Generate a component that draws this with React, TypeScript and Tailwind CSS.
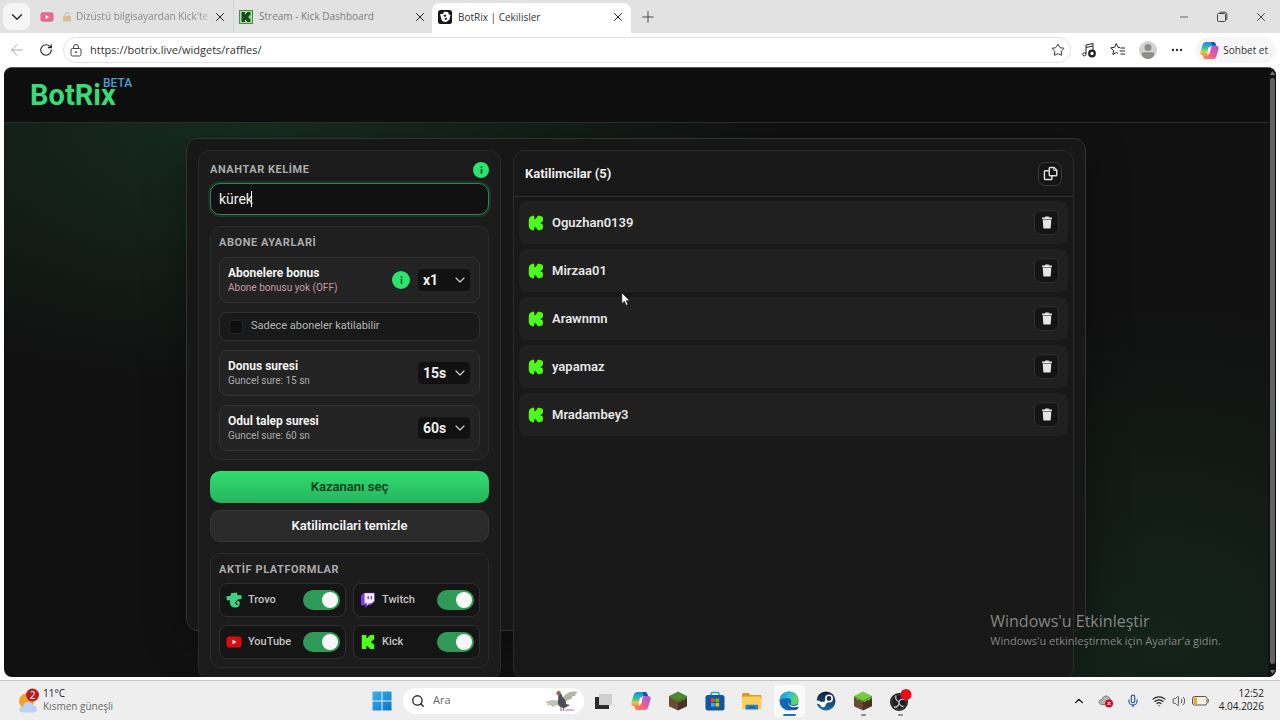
import { useState } from "react";
import type { ReactNode } from "react";
import {
  ArrowLeft,
  ChevronDown,
  ChevronUp,
  Ellipsis,
  Mic,
  Minus,
  Plus,
  RotateCw,
  Search,
  Star,
  Volume2,
  Wifi,
  X
} from "lucide-react";

const participants = ["Oguzhan0139", "Mirzaa01", "Arawnmn", "yapamaz", "Mradambey3"];

const KICK_PATH =
  "M1.333 0h8v5.333H12V2.667h2.667V0h8v8H20v2.667h-2.667v2.666H20V16h2.667v8h-8v-2.667H12v-2.666H9.333V24h-8Z";

function KickIcon({ className }: { className?: string }) {
  return (
    <svg viewBox="0 0 24 24" className={className} fill="#53fc18" aria-hidden="true">
      <path d={KICK_PATH} />
    </svg>
  );
}

function KickBadge() {
  return (
    <svg viewBox="-1 -1 26 26" className="size-4 shrink-0" aria-hidden="true">
      <path
        d="M3.500 4.500 7 2.500v5.500l3.500 1 3.500-3L16.500 2.500l4.300 1.500V8L17 11v2l3.800 3v4l-4.300 1.500-2.500-3.500-3.500-2.500L7 16.500v5l-3.500-2-.8-3V7.500Z"
        fill="#4dfa1e"
        stroke="#4dfa1e"
        strokeWidth="5"
        strokeLinejoin="round"
      />
      <path d="M11 0v4.200M11 20v4.200" stroke="#202020" strokeWidth="1.500" />
    </svg>
  );
}

function TrovoIcon() {
  return (
    <svg viewBox="0 0 16 16" className="size-4" aria-hidden="true">
      <path
        d="M4.800 1.200 11 .600l.600 2.600 3.700-.2.400 3.800-3 .7H11c2 .8 3 2.300 2.800 4.400-.2 2.200-2.300 3.700-4.900 3.700-3.100 0-4.900-1.900-4.900-4.500V8.500L.900 8.200.200 4.600l4.400-.8Z"
        fill="#3fd17f"
      />
      <path
        d="M15 8.500c-2-.4-4.200 0-5 1.400-.9 1.600.6 3.200 2 2.400"
        fill="none"
        stroke="#151515"
        strokeWidth="1"
      />
    </svg>
  );
}

function TwitchIcon() {
  return (
    <svg viewBox="0 0 16 16" className="size-4" aria-hidden="true">
      <path d="M1 3.500 4 .800h10.500v8.700l-4.300 3.800H8L5.300 16v-2.700H1Z" fill="#7c3aed" />
      <path d="M4.600 1.200h9.700V9l-2.500 2.300H9.500L7 13.300v-2H4.600Z" fill="#f5efff" />
      <path d="M8.200 4v3.200M11.300 4v3.200" stroke="#6d28d9" strokeWidth="1.200" />
    </svg>
  );
}

function YoutubeIcon({ className }: { className?: string }) {
  return (
    <svg viewBox="0 0 16 12" className={className} aria-hidden="true">
      <rect x="0.500" y="0.500" width="15" height="11" rx="2.800" fill="currentColor" />
      <path d="m6.500 3.700 4 2.300-4 2.300Z" fill="#fff" />
    </svg>
  );
}

function TrashIcon() {
  return (
    <svg viewBox="0 0 12 13" className="h-[13px] w-3" fill="#e4e4e4" aria-hidden="true">
      <path d="M4.300.500h3.400l.5.900h2.800v1.500H1V1.400h2.800Z" />
      <path d="M1.700 3.500h8.600l-.6 8.200c0 .500-.4.900-1 .9H3.300c-.6 0-1-.4-1-.9Z" />
    </svg>
  );
}

function CopyIcon() {
  return (
    <svg viewBox="0 0 16 16" className="size-[15px]" fill="none" stroke="#dcdcdc" strokeWidth="1.600" aria-hidden="true">
      <path d="M7.500 1.500h4.200l3 3v5.200a.8.8 0 0 1-.8.800H7.500a.8.8 0 0 1-.8-.8V2.300a.8.8 0 0 1 .8-.8Z" />
      <path d="M11.500 1.700v3h3" strokeWidth="1" />
      <path d="M6.500 5H2.300a.8.8 0 0 0-.8.800v7.900c0 .4.400.8.800.8h6.400a.8.8 0 0 0 .8-.8v-3" />
    </svg>
  );
}

function CopilotIcon({ className }: { className?: string }) {
  return (
    <svg viewBox="0 0 20 20" className={className} aria-hidden="true">
      <defs>
        <linearGradient id="cp-a" x1="0" y1="0" x2="0" y2="1">
          <stop offset="0" stopColor="#1a8fe0" />
          <stop offset="0.450" stopColor="#2fbfa8" />
          <stop offset="0.750" stopColor="#d9cf3a" />
          <stop offset="1" stopColor="#f58a3c" />
        </linearGradient>
        <linearGradient id="cp-b" x1="1" y1="0" x2="0" y2="1">
          <stop offset="0" stopColor="#a259e8" />
          <stop offset="0.500" stopColor="#ea5a9c" />
          <stop offset="1" stopColor="#fb8b3c" />
        </linearGradient>
      </defs>
      <path d="M6.500 1H14c1.300 0 1.900.8 2.300 2l.7 2h-4c-1.500 0-2.200.9-2.600 2.200L8.600 13c-.4 1.300-1 2-2.400 2H3C1 15 0 13.600.500 11.500l2.300-7.700C3.400 2 4.500 1 6.500 1Z" fill="url(#cp-a)" />
      <path d="M11.500 1H14c1.300 0 1.900.8 2.300 2l.7 2h-4.500Z" fill="#1d4fb8" />
      <path d="M13.500 19H6c-1.300 0-1.900-.8-2.300-2L3 15h4c1.500 0 2.200-.9 2.600-2.200L11.400 7c.4-1.300 1-2 2.400-2H17c2 0 3 1.400 2.500 3.500l-2.300 7.700c-.6 1.800-1.700 2.800-3.700 2.800Z" fill="url(#cp-b)" />
      <path d="M9 6.700h2.500l-1.300 6.600H7.500Z" fill="#fff" />
    </svg>
  );
}

function InfoDot({ className }: { className: string }) {
  return (
    <button
      type="button"
      aria-label="Bilgi"
      className={`flex shrink-0 items-center justify-center rounded-full bg-[#2be36d] ${className}`}
    >
      <svg viewBox="0 0 4 10" className="h-2 w-[3px]" fill="#0c4a22" aria-hidden="true">
        <rect x="1" y="0" width="2" height="2" />
        <rect x="1" y="3.500" width="2" height="6.500" />
      </svg>
    </button>
  );
}

function Tab({ icon, title, className, titleClass }: { icon: ReactNode; title: ReactNode; className: string; titleClass: string }) {
  return (
    <div className={`flex items-center ${className}`}>
      {icon}
      <span className={`min-w-0 flex-1 whitespace-nowrap text-[10px] ${titleClass}`}>{title}</span>
      <button type="button" aria-label="Sekmeyi kapat">
        <X className="size-3.5 text-[#222]" strokeWidth={1.7} />
      </button>
    </div>
  );
}

function BrowserChrome() {
  return (
    <div className="font-['Open_Sans',sans-serif] text-[#333]">
      <div className="flex h-[33px] items-stretch bg-[#e2e2e2]">
        <button
          type="button"
          aria-label="Sekme arama"
          className="my-[3px] ml-[3px] flex w-[27px] items-center justify-center rounded-lg bg-[#f5f5f5]"
        >
          <ChevronDown className="size-[18px] text-[#222]" strokeWidth={1.7} />
        </button>
        <Tab
          icon={<YoutubeIcon className="h-3 w-3.5 shrink-0 text-[#e66a90]" />}
          title={
            <span className="flex items-center gap-1">
              <svg viewBox="0 0 10 10" className="size-2.5 shrink-0" aria-hidden="true">
                <path d="M3 4V2.500a2 2 0 0 1 4 0V4" fill="none" stroke="#b9b9b9" />
                <rect x="1" y="4" width="8" height="5.500" rx="1" fill="#d8bf94" />
              </svg>
              Dizüstü bilgisayardan Kick'te i
            </span>
          }
          className="w-[198px] pr-px pl-[10px]"
          titleClass="ml-2 text-[#8a8a8a] [mask-image:linear-gradient(to_right,#000_90%,transparent)]"
        />
        <Tab
          icon={
            <span className="flex size-[14px] items-center justify-center border border-[#5d7f5d] bg-[#8ff08a]">
              <svg viewBox="0 0 24 24" className="size-2.5" fill="#24421f" aria-hidden="true">
                <path d={KICK_PATH} />
              </svg>
            </span>
          }
          title="Stream - Kick Dashboard"
          className="ml-[5px] w-[199px] border-l border-[#d3d3d3] px-[5px]"
          titleClass="ml-1.5 text-[#7d7d7d]"
        />
        <Tab
          icon={
            <svg viewBox="0 0 14 14" className="size-3.5" aria-hidden="true">
              <rect width="14" height="14" rx="2.500" fill="#15151c" />
              <path d="m2 4.200 3.200-.5.800-1.900 4 .3 1 2.300 1.500.6-1 4.600-3.500 2.700L4 11Z" fill="#fff" />
              <path d="m5.500 5.200 2.300-.6.500 1.700-2 .7Zm1 3.200 2.200-.8.400 1.600-2 .9Z" fill="#15151c" />
            </svg>
          }
          title="BotRix | Cekilisler"
          className="mt-[3px] w-[199px] rounded-t-lg bg-white px-1.5 pb-[2px]"
          titleClass="ml-1.5 text-[#333]"
        />
        <button type="button" aria-label="Yeni sekme" className="px-2">
          <Plus className="size-[18px] text-[#444]" strokeWidth={1.3} />
        </button>
        <div className="ml-auto flex items-center gap-[26px] pr-3 text-[#333]">
          <button type="button" aria-label="Küçült">
            <Minus className="size-3" strokeWidth={1.5} />
          </button>
          <button type="button" aria-label="Geri yükle">
            <svg viewBox="0 0 12 12" className="size-3" fill="none" stroke="currentColor" strokeWidth="0.900" aria-hidden="true">
              <rect x="1.500" y="2.500" width="8" height="8" rx="1" />
              <path d="M3.500 1.200H9c1.100 0 1.800.7 1.800 1.800v6" />
            </svg>
          </button>
          <button type="button" aria-label="Kapat">
            <X className="size-3.5" strokeWidth={1.5} />
          </button>
        </div>
      </div>

      <div className="flex h-[34px] items-center bg-white pr-1 pl-2">
        <button type="button" aria-label="Geri">
          <ArrowLeft className="size-[18px] text-[#a5a5a5]" strokeWidth={1.3} />
        </button>
        <button type="button" aria-label="Yenile" className="ml-[13px]">
          <RotateCw className="size-3.5 text-[#222]" />
        </button>
        <div className="ml-2.5 flex h-[26px] flex-1 items-center rounded-full border border-[#e0e0e0] pr-[5px] pl-1.5">
          <svg viewBox="0 0 12 13" className="h-[13px] w-3" fill="none" stroke="#444" aria-hidden="true">
            <rect x="1" y="4.500" width="10" height="7.500" rx="1.500" />
            <path d="M3.500 4.500V3a2.500 2.500 0 0 1 5 0v1.500" />
            <circle cx="6" cy="8.200" r="0.600" fill="#444" />
          </svg>
          <input
            aria-label="Adres çubuğu"
            defaultValue="https://botrix.live/widgets/raffles/"
            className="ml-2 min-w-0 flex-1 bg-transparent text-[11px] text-[#333] outline-none"
          />
          <Star className="size-3.5 text-[#333]" strokeWidth={1.7} />
        </div>
        <div className="ml-2.5 flex items-center gap-[13px] text-[#222]">
          <svg viewBox="0 0 16 16" className="size-4" fill="none" stroke="currentColor" aria-hidden="true">
            <path d="M5 12V3l7-1.500V8M5 5.500 12 4" />
            <circle cx="3.400" cy="12.300" r="1.600" />
            <circle cx="11" cy="11.500" r="2.800" strokeWidth="2.200" />
          </svg>
          <svg viewBox="0 0 16 16" className="size-4" fill="none" stroke="currentColor" aria-hidden="true">
            <path d="M10 5.500 8 5.300 6.300 1.500 4.600 5.300.800 5.800l2.800 2.700-.7 4 3.400-2 1.700 1M10.500 6H15M9.500 9H15M10.500 12H15" />
          </svg>
          <svg viewBox="0 0 18 18" className="size-[18px]" aria-hidden="true">
            <circle cx="9" cy="9" r="9" fill="#d2d2d2" />
            <circle cx="9" cy="6.500" r="3.500" fill="#8d8d89" />
            <path d="M2.500 13.500c0-1.500 1.300-2.200 2.500-2.200h8c1.200 0 2.500.7 2.500 2.200C14 16.500 11.500 18 9 18s-5-1.500-6.500-4.500Z" fill="#8d8d89" />
          </svg>
          <Ellipsis className="size-3.5" strokeWidth={2} />
        </div>
        <button type="button" className="ml-3 flex h-[26px] items-center gap-1 rounded-full bg-[#f6f6f6] pr-2 pl-1 text-[10px]">
          <CopilotIcon className="size-[19px]" />
          Sohbet et
        </button>
      </div>
    </div>
  );
}

function SettingSelect({ id, value, options }: { id: string; value: string; options: string[] }) {
  return (
    <div className="relative">
      <select
        id={id}
        defaultValue={value}
        className="h-6 w-[54px] appearance-none rounded-md border border-[#222] bg-[#111] pl-[5px] text-sm leading-5 font-bold text-[#f0f0f0] outline-none"
      >
        {options.map((option) => (
          <option key={option}>{option}</option>
        ))}
      </select>
      <ChevronDown className="pointer-events-none absolute top-1 right-[3px] size-4 text-[#ccc]" strokeWidth={1.8} />
    </div>
  );
}

function SettingRow({ id, title, note, noteClass, children }: { id: string; title: string; note: string; noteClass: string; children: ReactNode }) {
  return (
    <div className="flex h-[46px] items-center justify-between rounded-lg border border-[#323232] bg-[#232323] px-2">
      <label htmlFor={id}>
        <span className="block text-xs leading-4 font-bold text-[#f2f2f2]">{title}</span>
        <span className={`block text-[10px] leading-[14px] ${noteClass}`}>{note}</span>
      </label>
      <div className="flex items-center gap-[7px]">{children}</div>
    </div>
  );
}

const platforms = [
  { name: "Trovo", icon: <TrovoIcon /> },
  { name: "Twitch", icon: <TwitchIcon /> },
  { name: "YouTube", icon: <YoutubeIcon className="h-3 w-4 text-[#dc0a14]" /> },
  { name: "Kick", icon: <KickIcon className="size-4 p-px" /> }
];

function RaffleSettings() {
  const [keyword, setKeyword] = useState("kürek");

  return (
    <section className="rounded-xl border border-[#2b2b2b] bg-[#1b1b1b] p-[11px]">
      <div className="flex h-4 items-center justify-between">
        <label htmlFor="keyword" className="text-[11px] leading-4 font-bold tracking-wider text-[#ababab]">
          ANAHTAR KELİME
        </label>
        <InfoDot className="size-4" />
      </div>
      <div className="relative mt-[5px]">
        <input
          id="keyword"
          value={keyword}
          onChange={(event) => setKeyword(event.target.value)}
          className="h-8 w-full rounded-[10px] border border-[#2c8553] bg-[#111] px-2 text-sm text-[#f0f0f0] ring-2 ring-[#1b3326] outline-none"
        />
        {keyword === "kürek" && <span className="absolute top-2 left-[41px] h-4 w-px bg-white" />}
      </div>

      <div className="mt-[11px] rounded-[10px] border border-[#2b2b2b] bg-[#1f1f1f] p-2">
        <h2 className="text-[11px] leading-4 font-bold tracking-wider text-[#ababab]">ABONE AYARLARİ</h2>
        <div className="mt-1.5 space-y-[9px]">
          <SettingRow id="bonus" title="Abonelere bonus" note="Abone bonusu yok (OFF)" noteClass="text-[#c79aa8]">
            <InfoDot className="size-[18px]" />
            <SettingSelect id="bonus" value="x1" options={["x1", "x2", "x3"]} />
          </SettingRow>
          <label className="flex h-[29px] items-center gap-2 rounded-lg border border-[#303030] bg-[#191919] px-[9px] text-[11px] text-[#b5b5b5]">
            <input
              type="checkbox"
              className="size-3.5 appearance-none rounded-xs border border-[#242424] bg-[#0f0f0f] checked:bg-[#2be36d]"
            />
            Sadece aboneler katilabilir
          </label>
          <SettingRow id="spin" title="Donus suresi" note="Guncel sure: 15 sn" noteClass="text-[#ababab]">
            <SettingSelect id="spin" value="15s" options={["5s", "10s", "15s"]} />
          </SettingRow>
          <SettingRow id="claim" title="Odul talep suresi" note="Guncel sure: 60 sn" noteClass="text-[#ababab]">
            <SettingSelect id="claim" value="60s" options={["30s", "60s", "90s"]} />
          </SettingRow>
        </div>
      </div>

      <button
        type="button"
        className="mt-[11px] h-8 w-full rounded-[10px] bg-linear-to-b from-[#30de73] to-[#27b45c] text-[13px] font-semibold text-[#0b3c1b]"
      >
        Kazananı seç
      </button>
      <button
        type="button"
        className="mt-[7px] h-8 w-full rounded-[10px] border border-[#363636] bg-[#2a2a2a] text-[13px] font-semibold text-[#f5f5f5]"
      >
        Katilimcilari temizle
      </button>

      <div className="mt-[11px] rounded-[10px] border border-[#2b2b2b] bg-[#1c1c1c] p-2">
        <h2 className="text-[11px] leading-4 font-bold tracking-wider text-[#ababab]">AKTİF PLATFORMLAR</h2>
        <div className="mt-[5px] grid grid-cols-2 gap-x-[7px] gap-y-2">
          {platforms.map((platform) => (
            <label
              key={platform.name}
              className="flex h-[34px] items-center rounded-lg border border-[#2e2e2e] bg-[#151515] pr-[5px] pl-1.5 text-[11px] font-medium text-[#c4c4c4]"
            >
              {platform.icon}
              <span className="ml-1.5 flex-1">{platform.name}</span>
              <input
                type="checkbox"
                role="switch"
                defaultChecked
                className="flex h-5 w-[37px] appearance-none items-center rounded-full bg-[#444] px-0.5 before:size-4 before:rounded-full before:bg-[#f7f7f7] before:content-[''] checked:justify-end checked:bg-[#2f9a57]"
              />
            </label>
          ))}
        </div>
      </div>
    </section>
  );
}

function Participants() {
  return (
    <section className="rounded-xl border border-[#2b2b2b] bg-[#181818]">
      <div className="flex h-[46px] items-center justify-between border-b border-[#2e2e2e] px-[11px]">
        <h1 className="text-[13px] font-bold text-[#ededed]">Katilimcilar ({participants.length})</h1>
        <button
          type="button"
          aria-label="Kopyala"
          className="flex size-6 items-center justify-center rounded-[7px] border border-[#3a3a3a] bg-[#141414]"
        >
          <CopyIcon />
        </button>
      </div>
      <ul className="space-y-[5px] px-[5px] pt-1">
        {participants.map((name) => (
          <li key={name} className="flex h-[43px] items-center rounded-lg bg-[#202020] px-[9px]">
            <KickBadge />
            <span className="ml-2 flex-1 text-[13px] font-semibold text-[#e6e6e6]">{name}</span>
            <button
              type="button"
              aria-label={`${name} sil`}
              className="flex size-[25px] items-center justify-center rounded-[7px] border border-[#2f2f2f] bg-[#141414]"
            >
              <TrashIcon />
            </button>
          </li>
        ))}
      </ul>
    </section>
  );
}

function Scrollbar() {
  return (
    <div className="flex w-2 shrink-0 flex-col items-center bg-[#111] py-[2px]">
      <svg viewBox="0 0 5 4" className="mt-px h-1 w-[5px]" fill="#777" aria-hidden="true">
        <path d="M2.500 0 5 4H0Z" />
      </svg>
      <div className="my-[3px] w-[5px] flex-1 rounded-full bg-[#616161]" />
      <svg viewBox="0 0 5 4" className="mt-[3px] mb-px h-1 w-[5px]" fill="#777" aria-hidden="true">
        <path d="M0 0h5L2.500 4Z" />
      </svg>
    </div>
  );
}

function BlockIcon({ top }: { top: string }) {
  return (
    <svg viewBox="0 0 20 20" className="size-5" aria-hidden="true">
      <path d="m1 5 9 4v10.500l-9-4.300Z" fill="#6b4a33" />
      <path d="m19 5-9 4v10.500l9-4.300Z" fill="#4a3222" />
      <path d="m10 .500 9 4.500v2l-2 1-1 1.500-2-.5-2 2-2-.5-2-.5-2-1.500-2 .5-1-2-2-.5V5Z" fill={top} />
      <path d="m1 5 9 4.300L19 5v1.500l-9 4.300-9-4.300Z" fill="#3f6b25" opacity="0.500" />
    </svg>
  );
}

function TaskButton({ label, children, active, running }: { label: string; children: ReactNode; active?: boolean; running?: boolean }) {
  return (
    <button type="button" aria-label={label} className="relative flex h-full w-9 items-center justify-center">
      <span className={`flex h-8 w-[31px] items-center justify-center rounded ${active ? "bg-[#fafafa]" : ""}`}>{children}</span>
      {active && <span className="absolute bottom-1 h-0.5 w-[13px] rounded-full bg-[#1f6fc4]" />}
      {running && <span className="absolute bottom-1 h-0.5 w-[5px] rounded-full bg-[#8a8a8a]" />}
    </button>
  );
}

function Taskbar() {
  return (
    <footer className="grid h-10 shrink-0 grid-cols-[1fr_auto_1fr] border-t border-[#c8c8c8] bg-[#eee] font-['Open_Sans',sans-serif] text-[#222]">
      <div className="flex items-center gap-[3px] pl-[18px]">
        <svg viewBox="0 0 22 26" className="h-[26px] w-[22px]" aria-hidden="true">
          <circle cx="8.500" cy="13" r="7.500" fill="#f3a02c" />
          <path d="M5 24.500c-5 0-5-6 0-6 .5-5.500 8.500-6 10-1 5 0 5.500 7 0 7Z" fill="#bcd2f4" />
          <circle cx="14.500" cy="7" r="6.500" fill="#b81d22" />
          <text x="14.500" y="10.500" textAnchor="middle" fontSize="10" fill="#fff">2</text>
        </svg>
        <div className="pb-0.5 text-[10px] leading-[13px]">
          <div>11°C</div>
          <div className="text-[#6b6b6b]">Kısmen güneşli</div>
        </div>
      </div>

      <div className="flex items-center pl-2.5">
        <button type="button" aria-label="Başlat">
          <svg viewBox="0 0 20 20" className="size-5" aria-hidden="true">
            <defs>
              <linearGradient id="win" x1="0" y1="0" x2="1" y2="1">
                <stop offset="0" stopColor="#3cb4ea" />
                <stop offset="1" stopColor="#0a73c8" />
              </linearGradient>
            </defs>
            <path d="M.500.500h9v9h-9ZM10.500.500h9v9h-9ZM.500 10.500h9v9h-9ZM10.500 10.500h9v9h-9Z" fill="url(#win)" />
          </svg>
        </button>
        <div className="ml-[11px] flex h-[26px] w-[181px] items-center rounded-full bg-white pr-1 pl-2">
          <Search className="size-3.5 text-[#222]" strokeWidth={2.2} />
          <input
            aria-label="Ara"
            placeholder="Ara"
            className="ml-2 min-w-0 flex-1 bg-transparent text-[11px] outline-none placeholder:text-[#666]"
          />
          <svg viewBox="0 0 36 22" className="h-[22px] w-9" aria-hidden="true">
            <path d="M15 11C9 9 4 10 1 12.500l3 .5-1 2.500 4-.5 1 2 7-2.500Z" fill="#c3c5b3" />
            <path d="M18 9c3-6 9-8.500 16-7l-3 2 1 1.500-4 1 0 2-9 4Z" fill="#b3b7a2" />
            <path d="M14 4c2.500-2 4 0 4.500 3 2.500 2 4 5 3.500 7l4 1-3.500 2c-3 2-6.500 1-8-2-1.500-3 .5-6-.5-11Z" fill="#4c4e54" />
            <circle cx="14.700" cy="3.300" r="2.200" fill="#9d5f58" />
            <path d="M17 18v3M19.500 18v3" stroke="#a05752" />
            <path d="M17 20.500c5-2 10-2 15-.5l-4 1Z" fill="#cdb6c9" />
          </svg>
        </div>

        <div className="ml-[2px] flex h-full gap-px">
          <TaskButton label="Görev görünümü">
            <svg viewBox="0 0 20 20" className="size-5" aria-hidden="true">
              <rect x="1" y="6" width="14" height="12" fill="#2b2b2b" />
              <rect x="5" y="3" width="13" height="11" fill="#cfcfcf" />
            </svg>
          </TaskButton>
          <TaskButton label="Copilot">
            <CopilotIcon className="size-5" />
          </TaskButton>
          <TaskButton label="Minecraft Launcher">
            <BlockIcon top="#4f8a34" />
          </TaskButton>
          <TaskButton label="Microsoft Store">
            <svg viewBox="0 0 20 20" className="size-5" aria-hidden="true">
              <path d="M6 5V3c0-1 .6-1.500 1.500-1.500h5c.9 0 1.500.5 1.500 1.500v2" fill="none" stroke="#2f9bdc" strokeWidth="1.500" />
              <rect x="0.500" y="4" width="19" height="15.500" rx="2.500" fill="#15559f" />
              <path d="M6 7.500h3.600v3.600H6Z" fill="#f25022" />
              <path d="M10.500 7.500h3.600v3.600h-3.600Z" fill="#7fba00" />
              <path d="M6 12h3.600v3.600H6Z" fill="#32b1ee" />
              <path d="M10.500 12h3.600v3.600h-3.600Z" fill="#ffb900" />
            </svg>
          </TaskButton>
          <TaskButton label="Dosya Gezgini">
            <svg viewBox="0 0 20 20" className="size-5" aria-hidden="true">
              <path d="M0 3.500C0 2.500.600 2 1.500 2h5L8.500 4H18c1 0 1.500.5 1.500 1.500V8H0Z" fill="#d99a26" />
              <rect y="5.500" width="19.500" height="13" rx="1.500" fill="#f9cf5c" />
              <path d="M3.500 18.500V15c0-.8.500-1.300 1.300-1.300h10c.8 0 1.300.5 1.300 1.300v3.500Z" fill="#2c7cc7" />
              <path d="M6.500 16.300h6.500" stroke="#164f8a" />
            </svg>
          </TaskButton>
          <TaskButton label="Edge" active>
            <svg viewBox="0 0 20 20" className="size-5" aria-hidden="true">
              <defs>
                <linearGradient id="edge-top" x1="0" y1="0" x2="1" y2="0.400">
                  <stop offset="0" stopColor="#1b8fd6" />
                  <stop offset="0.500" stopColor="#2bbfd0" />
                  <stop offset="1" stopColor="#62d85a" />
                </linearGradient>
              </defs>
              <circle cx="10" cy="10" r="9.500" fill="#1767b8" />
              <path d="M.500 9.500C1 4 5 .500 10 .500c6 0 9.500 4 9.500 8.500 0 3-2.300 5-5 5-2 0-3-.8-2.500-2 1-2.500-.5-5-4-5C4.500 7 1.500 8 .500 9.500Z" fill="url(#edge-top)" />
              <path d="M8 10c-1 4 2.500 7.500 9.500 5.500l.8-.8 1.700 1-1.500 2.500-3 1C10 18 6.500 14 8 10Z" fill="#124a96" />
              <path d="M9.500 9c-1.500 3 1 6 5 6 1.500 0 3-.4 4.500-1.500l1 2.500h-2.500c-6 1.500-10-2.500-8-7Z" fill="#fafafa" />
            </svg>
          </TaskButton>
          <TaskButton label="Steam">
            <svg viewBox="0 0 20 20" className="size-5" aria-hidden="true">
              <defs>
                <linearGradient id="steam" x1="0" y1="0" x2="0" y2="1">
                  <stop offset="0" stopColor="#111d35" />
                  <stop offset="1" stopColor="#1c6ea8" />
                </linearGradient>
              </defs>
              <circle cx="10" cy="10" r="9.500" fill="url(#steam)" />
              <path d="m0 10.500 6.500 2.700M8 13l4-4" stroke="#fff" strokeWidth="3" />
              <circle cx="7" cy="13.500" r="2.700" fill="#fff" />
              <circle cx="13" cy="7.500" r="3.200" fill="#1a2c48" stroke="#fff" strokeWidth="1.600" />
            </svg>
          </TaskButton>
          <TaskButton label="Minecraft" running>
            <BlockIcon top="#74cf3f" />
          </TaskButton>
          <TaskButton label="OBS" running>
            <svg viewBox="0 0 24 24" className="size-6" aria-hidden="true">
              <circle cx="11" cy="13" r="9" fill="#1e1e20" />
              <g fill="none" stroke="#c9c9c9" strokeWidth="1.300">
                <circle cx="11" cy="13" r="7.300" stroke="#555" strokeWidth="0.800" />
                <path d="M8 6.500c-1 3 .5 5.500 3 6M17.500 11c-3-1.500-5.500-.5-6.500 1.500M6 18c3.500.5 5.500-2 5-5.500M11 12.500c0 3 2 5 4.500 5" />
              </g>
              <circle cx="18" cy="5.500" r="5.500" fill="#ea0d18" />
            </svg>
          </TaskButton>
        </div>
      </div>

      <div className="flex items-center justify-end pr-4">
        <ChevronUp className="size-3.5" />
        <svg viewBox="0 0 16 14" className="ml-3 h-3.5 w-4" aria-hidden="true">
          <path d="M3.500 10.500c-3.500-.5-3-5 .5-5C5 1 11 1 12 5l2 2-4 4Z" fill="#b5b5b5" stroke="#777" />
          <circle cx="11" cy="9.500" r="4" fill="#c4122f" />
          <path d="m9.500 8 3 3m0-3-3 3" stroke="#fff" />
        </svg>
        <Mic className="ml-3 size-3.5 text-[#2459a8]" />
        <Wifi className="ml-3 size-3.5" />
        <Volume2 className="ml-1.5 size-3.5 text-[#555]" strokeWidth={1.7} />
        <svg viewBox="0 0 17 10" className="ml-1.5 h-2.5 w-[17px]" aria-hidden="true">
          <rect x="0.500" y="0.500" width="14.500" height="8.500" rx="2" fill="#f7f1e2" stroke="#555" />
          <rect x="1.500" y="1.500" width="3.500" height="6.500" fill="#e9a73a" />
          <path d="M16.300 3v3.500" stroke="#555" />
        </svg>
        <div className="ml-2.5 pb-0.5 text-right text-[10px] leading-[13px]">
          <div>12:52</div>
          <div>4.04.2026</div>
        </div>
      </div>
    </footer>
  );
}

export default function App() {
  return (
    <div className="relative flex h-screen flex-col overflow-hidden bg-white">
      <BrowserChrome />

      <div className="mx-1 mb-[3px] flex min-h-0 flex-1 overflow-hidden rounded-lg border-t border-[#555] bg-[#111] font-['Roboto',sans-serif]">
        <div className="flex min-w-0 flex-1 flex-col">
          <header className="flex h-[55px] shrink-0 items-center border-b border-[#2b2d2c] bg-[#0e0e0e] pl-[26px]">
            <a href="#" className="relative text-[29px] leading-8 font-bold text-[#37dc78]">
              BotRix
              <span className="absolute top-[-4px] left-[73px] text-xs leading-4 font-medium text-[#4a9fd0]">BETA</span>
            </a>
          </header>
          <main className="min-h-0 flex-1 overflow-hidden bg-[radial-gradient(520px_260px_at_20%_0%,rgba(32,110,66,0.3),transparent),radial-gradient(380px_340px_at_92%_94%,rgba(26,96,56,0.24),transparent)] px-4 pt-[15px]">
            <div className="mx-auto grid h-[calc(100vh-227px)] max-w-[900px] grid-cols-[303px_1fr] gap-3 rounded-xl border border-[#303331] bg-[#171717] p-[11px] shadow-[0_12px_40px_rgba(0,0,0,0.35)]">
              <RaffleSettings />
              <Participants />
            </div>
          </main>
        </div>
        <Scrollbar />
      </div>

      <Taskbar />

      <div className="pointer-events-none absolute right-[59px] bottom-[69px] font-['Open_Sans',sans-serif] text-[#858585]">
        <div className="text-base leading-5">Windows'u Etkinleştir</div>
        <div className="text-[11px] leading-5">Windows'u etkinleştirmek için Ayarlar'a gidin.</div>
      </div>
      <svg viewBox="0 0 10 15" className="pointer-events-none absolute top-[292px] left-[621px] h-[15px] w-2.5" aria-hidden="true">
        <path d="M.800.800v11l2.600-2.400 1.700 4 1.900-.8-1.700-3.900h3.500Z" fill="#fff" stroke="#111" strokeWidth="0.700" />
      </svg>
    </div>
  );
}
